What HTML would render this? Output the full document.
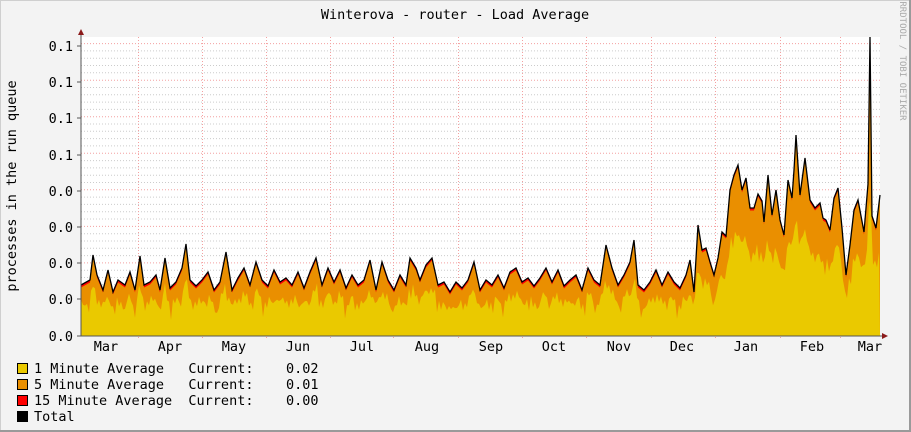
<!DOCTYPE html>
<html><head><meta charset="utf-8"><style>
html,body{margin:0;padding:0;background:#f3f3f3}
svg{display:block}
text{font-family:"DejaVu Sans Mono","Liberation Mono",monospace;font-size:13.5px;fill:#000}
</style></head><body>
<svg id="g" width="911" height="432" xmlns="http://www.w3.org/2000/svg">
<rect x="0" y="0" width="911" height="432" fill="#f3f3f3"/>
<rect x="0.5" y="0.5" width="909" height="430" fill="none" stroke="#cfcfcf"/>
<line x1="0" y1="431" x2="911" y2="431" stroke="#9a9a9a" stroke-width="2"/>
<line x1="910" y1="0" x2="910" y2="432" stroke="#9a9a9a" stroke-width="2"/>
<rect x="81" y="37" width="799" height="299" fill="#fff"/>
<g id="grid"></g>
<g id="data"></g>
<text x="455" y="19" text-anchor="middle">Winterova - router - Load Average</text>
<text transform="translate(16,186) rotate(-90)" text-anchor="middle">processes in the run queue</text>
<text transform="translate(900,61) rotate(90)" text-anchor="middle" style="font-size:9px;fill:#aaa">RRDTOOL / TOBI OETIKER</text>
<g id="ylab"></g>
<g id="xlab"></g>
<line x1="81" y1="336" x2="884" y2="336" stroke="#555"/>
<line x1="81" y1="336" x2="81" y2="33" stroke="#555"/>
<polygon points="78,35 84,35 81,29" fill="#8b1a1a"/>
<polygon points="882,333 882,339 888,336" fill="#8b1a1a"/>
<g>
<rect x="17.5" y="363.5" width="10" height="10" fill="#eac900" stroke="#000"/>
<rect x="17.5" y="379.5" width="10" height="10" fill="#ea8f00" stroke="#000"/>
<rect x="17.5" y="395.5" width="10" height="10" fill="#ff0000" stroke="#000"/>
<rect x="17.5" y="411.5" width="10" height="10" fill="#000" stroke="#000"/>
<text x="34" y="373" xml:space="preserve">1 Minute Average   Current:    0.02</text>
<text x="34" y="389" xml:space="preserve">5 Minute Average   Current:    0.01</text>
<text x="34" y="405" xml:space="preserve">15 Minute Average  Current:    0.00</text>
<text x="34" y="421">Total</text>
</g>
</svg>
<script>
var NS="http://www.w3.org/2000/svg";
function el(t,a,p){var e=document.createElementNS(NS,t);for(var k in a)e.setAttribute(k,a[k]);if(p)p.appendChild(e);return e;}
var grid=document.getElementById('grid');
for(var i=0;i<=40;i++){var y=336-i*7.31;if(y<37)break;var major=i%5==0;
 if(i==0)continue;
 el('line',{x1:81,x2:880,y1:y.toFixed(1),y2:y.toFixed(1),stroke:major?'#f4a0a0':'#cccccc','stroke-dasharray':'1,2','stroke-width':1},grid);}
var mx=[138,202,266,330,393,458,522,586,651,715,780,840];
mx.forEach(function(x){el('line',{x1:x+.5,x2:x+.5,y1:37,y2:340,stroke:'#f4a0a0','stroke-dasharray':'1,2'},grid);});
var yl=document.getElementById('ylab');
[[46,'0.1'],[82,'0.1'],[118,'0.1'],[155,'0.1'],[191,'0.0'],[227,'0.0'],[263,'0.0'],[299,'0.0'],[336,'0.0']].forEach(function(a){var t=el('text',{x:73,y:a[0]+5,'text-anchor':'end'},yl);t.textContent=a[1];el('line',{x1:77,x2:81,y1:a[0],y2:a[0],stroke:'#555'},yl);});
var xl=document.getElementById('xlab');
[[106,'Mar'],[170,'Apr'],[234,'May'],[298,'Jun'],[362,'Jul'],[427,'Aug'],[491,'Sep'],[554,'Oct'],[619,'Nov'],[682,'Dec'],[746,'Jan'],[812,'Feb'],[870,'Mar']].forEach(function(a){var t=el('text',{x:a[0],y:351,'text-anchor':'middle'},xl);t.textContent=a[1];});
var P=[81,285,90,280,93,255,97,275,103,290,108,270,113,292,118,280,125,285,130,272,135,290,140,256,144,285,150,282,156,275,160,290,165,258,170,288,176,282,182,268,186,244,190,280,196,286,202,280,208,272,214,290,220,282,226,252,232,290,238,278,244,268,250,285,256,262,262,280,268,286,274,270,280,282,286,278,292,285,298,272,304,288,310,272,316,258,322,285,328,268,334,282,340,270,346,288,352,275,358,285,364,280,370,260,376,290,382,262,388,280,394,290,400,275,406,285,410,258,416,268,420,280,426,265,432,258,438,285,444,282,450,292,456,282,462,288,468,280,474,262,480,290,486,280,492,285,498,275,504,288,510,272,516,268,522,282,528,278,534,286,540,278,546,268,552,282,558,270,564,286,570,280,576,275,582,290,588,268,594,280,600,285,606,245,612,268,618,285,624,275,630,262,634,240,638,285,644,290,650,282,656,270,662,285,668,272,674,282,680,288,686,275,690,260,694,292,698,225,702,250,706,248,710,262,714,275,718,258,722,232,726,236,730,190,734,175,738,165,742,190,746,178,750,208,754,208,758,194,762,201,764,222,768,175,772,215,776,190,780,220,784,235,788,180,792,198,794,170,796,135,800,195,805,158,810,200,815,208,820,203,823,218,826,220,830,230,834,198,838,188,842,228,846,275,850,245,854,210,858,200,864,232,868,184,870,37,872,216,876,228,880,195];
var pts=[];for(var i=0;i<P.length;i+=2)pts.push([P[i],P[i+1]]);
function area(arr){var s='M81,336';arr.forEach(function(p){s+=' L'+p[0]+','+p[1].toFixed(1);});return s+' L880,336 Z';}
var d=document.getElementById('data');
el('path',{d:area(pts),fill:'#ff0000'},d);
el('path',{d:area(pts.map(function(p){return [p[0],p[1]+2.5]})),fill:'#ea8f00'},d);
var yel=[];for(var x=81;x<=880;x+=2){
 var j=0;while(j<pts.length-2&&pts[j+1][0]<x)j++;
 var a=pts[j],b=pts[j+1],t=(x-a[0])/(b[0]-a[0]||1);var ty=a[1]+(b[1]-a[1])*t;
 if(ty<100)ty=200;
 var y=ty+0.38*(336-ty)+4*Math.sin(x*1.7)+3*Math.sin(x*0.53);
 if((x*7)%23<3)y+=9;
 yel.push([x,Math.min(y,320)]);}
el('path',{d:area(yel),fill:'#eac900'},d);
var s='M'+pts.map(function(p){return p[0]+','+p[1]}).join(' L');
el('path',{d:s,fill:'none',stroke:'#000','stroke-width':1.3},d);
</script>
</body></html>
